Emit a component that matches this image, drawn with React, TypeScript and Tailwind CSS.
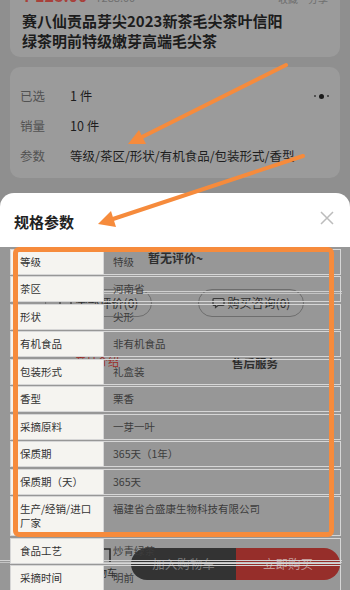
import React from "react";

const FONT = { fontFamily: '"Noto Sans CJK SC", "Noto Sans", sans-serif' };

const specs: { label: React.ReactNode; value: string }[] = [
  { label: "等级", value: "特级" },
  { label: "茶区", value: "河南省" },
  { label: "形状", value: "尖形" },
  { label: "有机食品", value: "非有机食品" },
  { label: "包装形式", value: "礼盒装" },
  { label: "香型", value: "栗香" },
  { label: "采摘原料", value: "一芽一叶" },
  { label: "保质期", value: "365天（1年）" },
  { label: "保质期（天）", value: "365天" },
  {
    label: (
      <>
        生产/经销/进口
        <br />
        厂家
      </>
    ),
    value: "福建省合盛康生物科技有限公司",
  },
  { label: "食品工艺", value: "炒青绿茶" },
  { label: "采摘时间", value: "明前" },
];

function ChatIcon() {
  return (
    <svg width="13" height="12" viewBox="0 0 13 12" fill="none" stroke="#3a3a3a" strokeWidth="1.2">
      <path d="M2 1.5h9a1 1 0 0 1 1 1v5a1 1 0 0 1-1 1H6l-2.5 2v-2H2a1 1 0 0 1-1-1v-5a1 1 0 0 1 1-1z" />
    </svg>
  );
}

// what shows through the sheet's see-through cells
function GhostPage() {
  return (
    <div className="absolute inset-0 z-0 text-[#2e2e2e]">
      <div className="absolute left-[148px] top-[3px] text-[12px] font-bold leading-[16px]">暂无评价~</div>

      <div className="absolute left-[45px] top-[42px] flex h-[28px] w-[107px] items-center justify-center gap-1 rounded-full border border-[#6e6e6e] text-[12px]">
        <ChatIcon />
        <span>全部评价(0)</span>
      </div>
      <div className="absolute left-[198px] top-[42px] flex h-[28px] w-[106px] items-center justify-center gap-[3px] rounded-full border border-[#6e6e6e] text-[12px]">
        <ChatIcon />
        <span>购买咨询(0)</span>
      </div>
      <div className="absolute left-[40px] right-[8px] top-[44px] h-px bg-[#cfcfcf]" />
      <div className="absolute left-[40px] right-[8px] top-[46px] h-px bg-[#c4c4c4]" />

      <div className="absolute left-[75px] top-[106px] text-[11px] leading-[16px] text-[#9c2a25]">产品介绍</div>
      <div className="absolute left-[232px] top-[108px] text-[11.5px] font-bold leading-[16px]">售后服务</div>

      <svg className="absolute left-[16px] top-[300px]" width="100" height="22" viewBox="0 0 100 22" fill="none" stroke="#2a2a2a" strokeWidth="1.6">
        <path d="M4 4v10h10" />
        <path d="M40 14l6-8" />
        <path d="M58 6h6v4" />
        <path d="M82 2h12v14h-12z" />
      </svg>
      <div className="absolute left-[87px] top-[319px] text-[10px] leading-[14px]">购物车</div>

      <div className="absolute left-[131px] top-[301px] flex h-[32px] w-[209px] overflow-hidden rounded-full text-[12.5px]">
        <div className="flex w-[105px] items-center justify-center bg-[#333333] text-[#7c7c7c]">加入购物车</div>
        <div className="flex flex-1 items-center justify-center bg-[#962e2a] text-[#c49a98]">立即购买</div>
      </div>
      <div className="absolute left-0 right-[8px] top-[313px] h-px bg-[#d2d2d2]" />
      <div className="absolute left-0 right-[8px] top-[315px] h-px bg-[#c4c4c4]" />
    </div>
  );
}

export default function App() {
  return (
    <div className="relative h-[590px] w-[350px] overflow-hidden bg-[#8f8f8f]" style={FONT}>
      {/* product card, dimmed */}
      <div className="mx-[10px] overflow-hidden rounded-b-[10px] bg-[#9b9b9b] px-[12px] pb-[6px]">
        <div className="-mt-[13px] flex h-[24px] items-start justify-between">
          <div className="flex items-end gap-[8px]">
            <span className="text-[16px] font-bold leading-[16px] text-[#a8403a]">¥ 128.00</span>
            <span className="text-[11px] leading-[12px] text-[#6f6f6f] line-through">¥288.00</span>
          </div>
          <div className="flex gap-[10px] pt-[6px] text-[10px] leading-[12px] text-[#6f6f6f]">
            <span>收藏</span>
            <span>分享</span>
          </div>
        </div>
        <h1 className="text-[15px] font-bold leading-[20px] text-[#1c1c1c]">
          赛八仙贡品芽尖2023新茶毛尖茶叶信阳
          <br />
          绿茶明前特级嫩芽高端毛尖茶
        </h1>
      </div>

      <div className="mx-[10px] mt-[10px] h-[111px] rounded-[10px] bg-[#9b9b9b] px-[10px] pt-[14px]">
        {[
          ["已选", "1 件"],
          ["销量", "10 件"],
          ["参数", "等级/茶区/形状/有机食品/包装形式/香型"],
        ].map(([k, v], i) => (
          <div key={k} className="flex h-[30px] items-center">
            <span className="w-[50px] text-[12.5px] text-[#525252]">{k}</span>
            <span className="flex-1 text-[12.5px] text-[#1e1e1e]">{v}</span>
            {i === 0 && (
              <span className="flex items-center gap-[3px] pr-[1px]">
                <span className="h-[2px] w-[2px] rounded-full bg-[#3a3a3a]" />
                <span className="h-[5px] w-[5px] rounded-full bg-[#1a1a1a]" />
                <span className="h-[2px] w-[2px] rounded-full bg-[#3a3a3a]" />
              </span>
            )}
          </div>
        ))}
      </div>

      {/* spec sheet */}
      <div className="mt-[15px] flex h-[54px] items-start justify-between rounded-t-[14px] bg-white pl-[14px] pr-[16px]">
        <h2 className="pt-[19px] text-[15px] font-bold leading-[20px] text-[#222]">规格参数</h2>
        <svg className="mt-[18px]" width="14" height="14" viewBox="0 0 14 14" stroke="#bcbcbc" strokeWidth="1.5">
          <path d="M1 1l12 12M13 1L1 13" />
        </svg>
      </div>

      <div className="relative h-[343px] bg-[#979797]">
        <GhostPage />
        <div className="relative z-10 ml-[10px] flex w-[331px] flex-col gap-[1.5px] pt-[1.5px]">
          {specs.map((s, i) => (
            <div key={i} className="flex border border-[#d6d6d6] text-[10.5px] leading-[14px]">
              <div className="w-[92px] shrink-0 bg-[#f5f4f0] py-[5px] pl-[9px] text-[#333]">{s.label}</div>
              <div className="flex-1 border-l border-[#d6d6d6] py-[5px] pl-[9px] text-[#3c3c3c]">{s.value}</div>
            </div>
          ))}
        </div>
        <div className="absolute left-[13px] top-0 z-20 h-[290px] w-[321px] rounded-[6px] border-[5px] border-[#f68b3c]" />
      </div>

      {/* annotation arrows */}
      <svg className="pointer-events-none absolute left-0 top-0 z-30" width="350" height="590" viewBox="0 0 350 590">
        <line x1="286" y1="65" x2="142" y2="137" stroke="#f68b3c" strokeWidth="4" strokeLinecap="round" />
        <polygon points="128,144 146,144 139,130" fill="#f68b3c" />
        <line x1="303" y1="156" x2="113" y2="219" stroke="#f68b3c" strokeWidth="4" strokeLinecap="round" />
        <polygon points="98,224 116,227 111,211" fill="#f68b3c" />
      </svg>
    </div>
  );
}
